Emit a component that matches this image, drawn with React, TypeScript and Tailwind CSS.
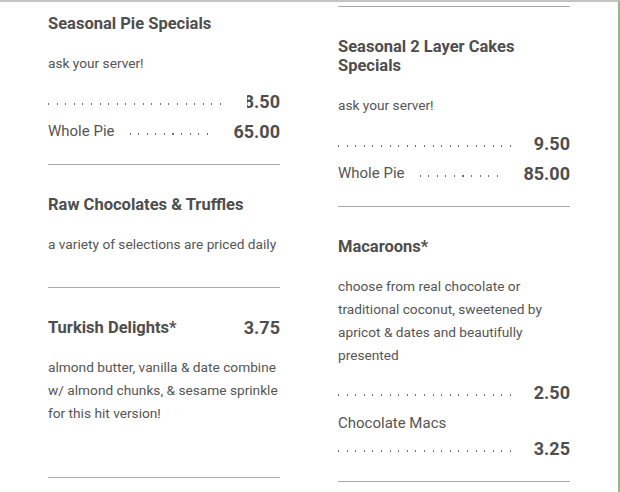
import React from "react";

const font = { fontFamily: "Roboto, 'Liberation Sans', sans-serif" };

function Dots({ n }: { n: number }) {
  return (
    <div className="flex items-center gap-[7.5px] pt-[6px]">
      {Array.from({ length: n }).map((_, i) => (
        <span key={i} className="block w-[1.1px] h-[1.1px] bg-[#6f6f6f]" />
      ))}
    </div>
  );
}

function Price({ text, w }: { text: string; w?: string }) {
  return (
    <div className={`ml-auto flex justify-end overflow-hidden whitespace-nowrap text-[18px] font-bold text-[#4e4e4e] ${w ?? ""}`}>
      <span>{text}</span>
    </div>
  );
}

function Rule({ className }: { className: string }) {
  return <div className={`h-px bg-[#ababab] ${className}`} />;
}

export default function App() {
  return (
    <div
      style={font}
      className="w-[620px] h-[492px] overflow-hidden bg-white border-t-2 border-t-[#c4c4c4] border-r-2 border-r-[#93bd80] text-[#555]"
    >
      <div className="flex pl-[48px] gap-[58px]">
        {/* Left column */}
        <div className="w-[232px] flex flex-col">
          <h2 className="mt-[12px] text-[16.5px] leading-[20px] font-bold text-[#4e4e4e]">Seasonal Pie Specials</h2>
          <p className="mt-[18px] text-[13.7px] leading-[23px]">ask your server!</p>
          <div className="mt-[11px] h-[30px] flex items-center">
            <Dots n={21} />
            <Price text="8.50" w="w-[33px]" />
          </div>
          <div className="h-[30px] flex items-center">
            <span className="text-[15px]">Whole Pie</span>
            <div className="ml-[15px]">
              <Dots n={10} />
            </div>
            <Price text="65.00" />
          </div>
          <Rule className="mt-[18px]" />
          <h2 className="mt-[30px] text-[16.5px] leading-[20px] font-bold text-[#4e4e4e]">Raw Chocolates &amp; Truffles</h2>
          <p className="mt-[18px] text-[13.7px] leading-[23px] whitespace-nowrap">a variety of selections are priced daily</p>
          <Rule className="mt-[31px]" />
          <div className="mt-[30px] flex items-center justify-between leading-[20px]">
            <h2 className="text-[16.5px] font-bold text-[#4e4e4e]">Turkish Delights*</h2>
            <span className="text-[18px] font-bold text-[#4e4e4e]">3.75</span>
          </div>
          <p className="mt-[18px] mr-[-6px] text-[13.7px] leading-[23px]">
            almond butter, vanilla &amp; date combine w/ almond chunks, &amp; sesame sprinkle for this hit version!
          </p>
          <Rule className="mt-[52px]" />
        </div>

        {/* Right column */}
        <div className="w-[232px] flex flex-col">
          <Rule className="mt-[4px]" />
          <h2 className="mt-[30px] text-[16.5px] leading-[19px] font-bold text-[#4e4e4e]">
            Seasonal 2 Layer Cakes
            <br />
            Specials
          </h2>
          <p className="mt-[19px] text-[13.7px] leading-[23px]">ask your server!</p>
          <div className="mt-[11px] h-[30px] flex items-center">
            <Dots n={21} />
            <Price text="9.50" />
          </div>
          <div className="h-[30px] flex items-center">
            <span className="text-[15px]">Whole Pie</span>
            <div className="ml-[15px]">
              <Dots n={10} />
            </div>
            <Price text="185.00" w="w-[48px]" />
          </div>
          <Rule className="mt-[18px]" />
          <h2 className="mt-[30px] text-[16.5px] leading-[20px] font-bold text-[#4e4e4e]">Macaroons*</h2>
          <p className="mt-[18px] text-[13.7px] leading-[23px]">
            choose from real chocolate or traditional coconut, sweetened by apricot &amp; dates and beautifully presented
          </p>
          <div className="mt-[10px] h-[30px] flex items-center">
            <Dots n={21} />
            <Price text="12.50" w="w-[39px]" />
          </div>
          <div className="mt-[3px] h-[26px] flex items-center text-[15px]">Chocolate Macs</div>
          <div className="h-[24px] flex items-center">
            <Dots n={21} />
            <Price text="13.25" w="w-[39px]" />
          </div>
          <Rule className="mt-[21px]" />
        </div>
      </div>
    </div>
  );
}
